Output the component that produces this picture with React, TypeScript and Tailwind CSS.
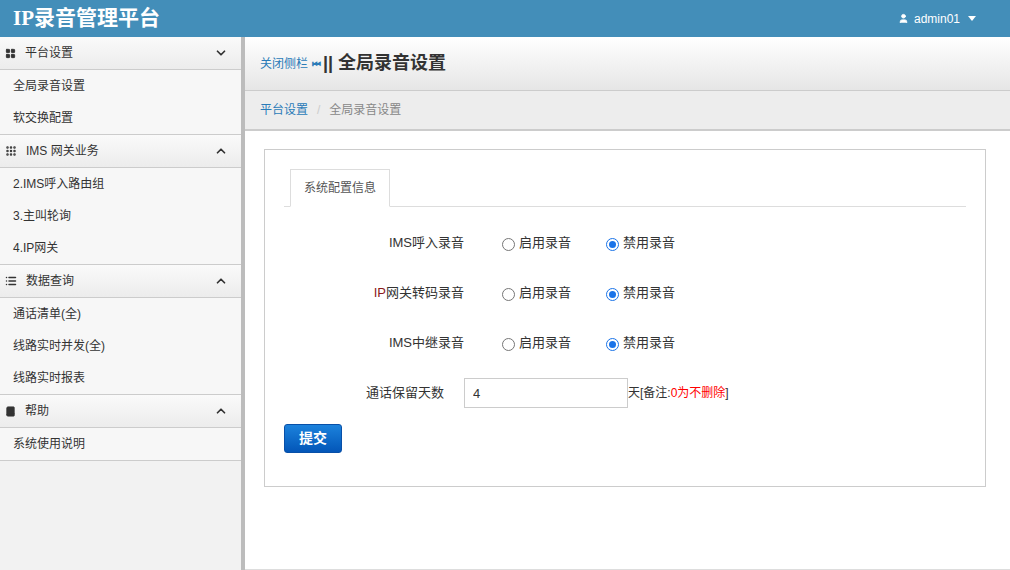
import React from 'react';
import { ChevronDown, ChevronUp, User, LayoutGrid, Grip, List, Book } from 'lucide-react';

const font = { fontFamily: '"Liberation Sans", "Noto Sans CJK SC", sans-serif' };

const Section: React.FC<{ icon: React.ReactNode; title: string; open?: boolean; items: string[] }> = ({ icon, title, open, items }) => (
  <div>
    <div className="flex h-[33px] items-center justify-between border-b border-[#ccc] bg-gradient-to-b from-[#fafafa] to-[#ececec] px-[5px] text-[12px] text-[#333]">
      <div className="flex items-center gap-[9px]">
        {icon}
        <span>{title}</span>
      </div>
      {open ? <ChevronDown className="mr-[8px] h-[14px] w-[14px]" strokeWidth={3} /> : <ChevronUp className="mr-[8px] h-[14px] w-[14px]" strokeWidth={3} />}
    </div>
    {items.map((it) => (
      <div key={it} className="flex h-[32px] items-center bg-[#f7f7f7] pl-[13px] text-[12px] text-[#333]">{it}</div>
    ))}
    <div className="border-b border-[#ccc]" />
  </div>
);

const Radio: React.FC<{ checked?: boolean; label: string }> = ({ checked, label }) => (
  <label className="flex items-center gap-[4px] text-[13px] text-[#333]">
    {checked ? (
      <span className="mt-[3px] flex h-[13px] w-[13px] items-center justify-center rounded-full border border-[#1a73e8]">
        <span className="h-[7px] w-[7px] rounded-full bg-[#1a73e8]" />
      </span>
    ) : (
      <span className="mt-[3px] h-[13px] w-[13px] rounded-full border border-[#767676] bg-white" />
    )}
    {label}
  </label>
);

const Row: React.FC<{ label: React.ReactNode }> = ({ label }) => (
  <div className="flex h-[50px] items-center">
    <div className="w-[180px] text-right text-[13px] text-[#333]">{label}</div>
    <div className="ml-[38px] w-[104px]"><Radio label="启用录音" /></div>
    <Radio checked label="禁用录音" />
  </div>
);

export default function App() {
  return (
    <div className="flex h-[570px] w-[1010px] flex-col overflow-hidden bg-white" style={font}>
      <div className="flex h-[37px] shrink-0 items-center justify-between bg-[#438eb9] pl-[13px] pr-[34px] text-white">
        <span className="text-[21px] font-bold" style={{ fontFamily: '"Liberation Serif", "Noto Sans CJK SC", serif' }}>IP录音管理平台</span>
        <div className="flex items-center gap-[5px] text-[12px]">
          <User className="h-[11px] w-[11px]" fill="white" />
          <span>admin01</span>
          <span className="ml-[3px] border-x-[4px] border-t-[5px] border-x-transparent border-t-white" />
        </div>
      </div>
      <div className="flex flex-1">
        <div className="w-[241px] shrink-0 bg-[#f2f2f2]">
          <Section icon={<LayoutGrid className="h-[11px] w-[11px]" fill="#333" />} title="平台设置" open items={['全局录音设置', '软交换配置']} />
          <Section icon={<Grip className="h-[12px] w-[12px]" strokeWidth={3} color="#333" />} title="IMS 网关业务" items={['2.IMS呼入路由组', '3.主叫轮询', '4.IP网关']} />
          <Section icon={<List className="h-[12px] w-[12px]" strokeWidth={3} />} title="数据查询" items={['通话清单(全)', '线路实时并发(全)', '线路实时报表']} />
          <Section icon={<Book className="h-[11px] w-[11px]" fill="#333" />} title="帮助" items={['系统使用说明']} />
        </div>
        <div className="w-[4px] shrink-0 bg-[#bcbcbc]" />
        <div className="flex flex-1 flex-col border-b border-[#ddd]">
          <div className="flex h-[54px] items-center border-b border-[#ccc] bg-gradient-to-b from-white to-[#e6e6e6] pl-[15px]">
            <span className="text-[12px] text-[#2a7bb8]">关闭侧栏</span>
            <span className="ml-[4px] text-[10px] font-bold text-[#2a7bb8]">⏮</span>
            <span className="ml-[2px] text-[18px] font-bold text-[#333]">|| 全局录音设置</span>
          </div>
          <div className="flex h-[40px] items-center border-b-2 border-[#ccc] bg-[#ededed] pl-[15px] text-[12px]">
            <span className="text-[#2a7bb8]">平台设置</span>
            <span className="mx-[9px] text-[#ccc]">/</span>
            <span className="text-[#888]">全局录音设置</span>
          </div>
          <div className="px-[19px] pt-[18px]">
            <div className="h-[338px] w-[722px] border border-[#ccc] px-[19px] pt-[19px]">
              <div className="flex border-b border-[#ddd]">
                <div className="ml-[6px] -mb-px flex h-[38px] items-center border border-b-white border-[#ddd] bg-white px-[13px] text-[12px] text-[#555]">系统配置信息</div>
              </div>
              <div className="pt-[11px]">
                <Row label="IMS呼入录音" />
                <Row label={<><span className="text-[#8b1a1a]">IP</span>网关转码录音</>} />
                <Row label="IMS中继录音" />
                <div className="flex h-[50px] items-center">
                  <div className="w-[160px] text-right text-[13px] text-[#333]">通话保留天数</div>
                  <input defaultValue="4" className="ml-[20px] h-[30px] w-[164px] border border-[#ccc] px-[8px] text-[13px] text-[#333] outline-none" />
                  <span className="text-[12px] text-[#333]">天[备注:<span className="text-[#f00]">0为不删除</span>]</span>
                </div>
                <button className="mt-[6px] h-[29px] w-[58px] rounded-[3px] border border-[#0850a8] bg-gradient-to-b from-[#1c82dc] to-[#0456b8] text-[14px] font-bold text-white">提交</button>
              </div>
            </div>
          </div>
        </div>
      </div>
    </div>
  );
}
